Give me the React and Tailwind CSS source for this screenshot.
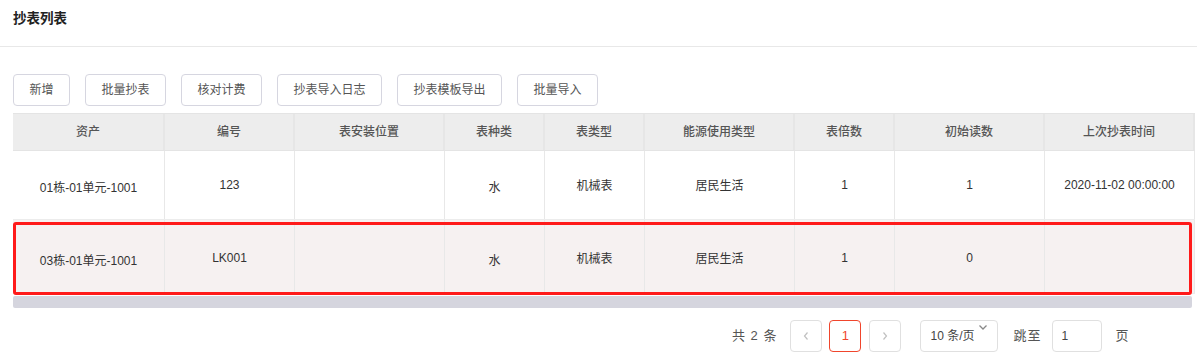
import React from "react";

const cols = ["资产", "编号", "表安装位置", "表种类", "表类型", "能源使用类型", "表倍数", "初始读数", "上次抄表时间"];
const rows = [
  { h: "h-[69px]", bg: "bg-white", cells: ["01栋-01单元-1001", "123", "", "水", "机械表", "居民生活", "1", "1", "2020-11-02 00:00:00"], off: [3, 0, 0, 3, 1, 1, 0, 0, 0] },
  { h: "h-[74px]", bg: "bg-[#f6f1f1]", cells: ["03栋-01单元-1001", "LK001", "", "水", "机械表", "居民生活", "1", "0", ""], off: [4, 1, 0, 4, 2, 2, 1, 1, 0] },
];
const grid = "grid grid-cols-[152px_130px_150px_100px_100px_150px_100px_150px_150px]";
const buttons = [
  ["新增", "w-[57px]"],
  ["批量抄表", "w-[81px]"],
  ["核对计费", "w-[81px]"],
  ["抄表导入日志", "w-[105px]"],
  ["抄表模板导出", "w-[105px]"],
  ["批量导入", "w-[81px]"],
];

export default function App() {
  return (
    <div className="w-[1197px] h-[362px] bg-white text-[12px] text-[#333] overflow-hidden" style={{ fontFamily: '"Liberation Sans", "Noto Sans CJK SC", sans-serif' }}>
      <div className="h-[47px] border-b border-[#e8e8e8] px-[13px] pt-[10px]">
        <div className="text-[13.5px] font-bold text-[#222] leading-[18px]">抄表列表</div>
      </div>
      <div className="px-[13px] pt-[27px] flex gap-[15px]">
        {buttons.map(([t, w]) => (
          <div key={t} className={`${w} h-[32px] border border-[#d6d6e0] rounded-[4px] flex items-center justify-center text-[#555]`}>{t}</div>
        ))}
      </div>
      <div className="ml-[13px] mt-[7px] w-[1182px] relative">
        <div className={`${grid} h-[38px] bg-[#ededed] border-t border-[#e2e2e2] border-b border-[#e4e4e4]`}>
          {cols.map((c) => (
            <div key={c} className="border-r-2 border-[#e6e6e6] flex items-center justify-center text-[#555] font-medium">{c}</div>
          ))}
        </div>
        {rows.map((r, i) => (
          <div key={i} className={`${grid} ${r.h} ${r.bg} border-b border-[#ececec]`}>
            {r.cells.map((c, j) => (
              <div key={j} className="border-r border-[#e8e8e8] flex items-center justify-center">
                <span style={{ transform: `translateY(${r.off[j]}px)` }}>{c}</span>
              </div>
            ))}
          </div>
        ))}
        <div className="absolute left-0 top-[109px] w-[1179px] h-[73px] border-[3px] border-[#ff1a1a] rounded-[3px] pointer-events-none" />
        <div className="mt-[2px] w-[1179px] h-[12px] bg-[#d5d5de] rounded-[2px]" />
      </div>
      <div className="flex items-center mt-[12px] pl-[732px] text-[#555]">
        <span className="text-[13px] tracking-[1px]">共 2 条</span>
        <div className="ml-[13px] w-[32px] h-[32px] border border-[#e0e0e0] rounded-[4px] flex items-center justify-center text-[#c0c0c0]">
          <svg width="8" height="10" viewBox="0 0 8 10"><path d="M5.5 1.5 L2.5 5 L5.5 8.5" fill="none" stroke="currentColor" strokeWidth="1.2" /></svg>
        </div>
        <div className="ml-[7px] w-[32px] h-[32px] border border-[#f0452c] rounded-[4px] flex items-center justify-center text-[#f0452c] text-[13px]">1</div>
        <div className="ml-[8px] w-[32px] h-[32px] border border-[#e0e0e0] rounded-[4px] flex items-center justify-center text-[#c0c0c0]">
          <svg width="8" height="10" viewBox="0 0 8 10"><path d="M2.5 1.5 L5.5 5 L2.5 8.5" fill="none" stroke="currentColor" strokeWidth="1.2" /></svg>
        </div>
        <div className="ml-[19px] w-[78px] h-[32px] border border-[#e0e0e0] rounded-[4px] relative flex items-center pl-[9px] text-[#444]">
          <span>10 条/页</span>
          <svg className="absolute left-[57px] top-[3px] text-[#888]" width="10" height="7" viewBox="0 0 10 7"><path d="M1.5 1.5 L5 5 L8.5 1.5" fill="none" stroke="currentColor" strokeWidth="1.3" /></svg>
        </div>
        <span className="ml-[15px] text-[13px] tracking-[1px]">跳至</span>
        <div className="ml-[11px] w-[50px] h-[32px] border border-[#e0e0e0] rounded-[4px] flex items-center pl-[8px] text-[#444]">1</div>
        <span className="ml-[13px] text-[13px]">页</span>
      </div>
    </div>
  );
}
